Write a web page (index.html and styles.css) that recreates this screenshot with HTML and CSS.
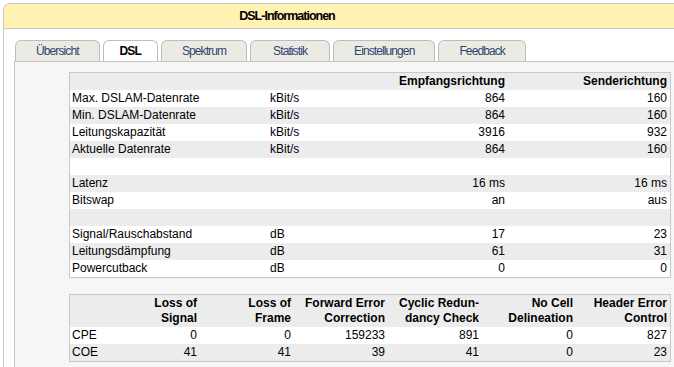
FILE: index.html
```html
<!DOCTYPE html>
<html lang="de">
<head>
    <meta charset="UTF-8">
    <title>DSL-Informationen</title>
    <link rel="stylesheet" href="styles.css">
</head>
<body>

<div class="box">
    <div class="box-head">DSL-Informationen</div>
    <div class="box-body">
        <ul class="tabs">
            <li class="tab">Übersicht</li>
            <li class="tab active">DSL</li>
            <li class="tab">Spektrum</li>
            <li class="tab">Statistik</li>
            <li class="tab">Einstellungen</li>
            <li class="tab">Feedback</li>
        </ul>
        <div class="panel">
            <table class="grid info">
                <colgroup>
                    <col class="c-label">
                    <col class="c-unit">
                    <col class="c-down">
                    <col class="c-up">
                </colgroup>
                <thead>
                    <tr>
                        <th></th>
                        <th></th>
                        <th class="num">Empfangsrichtung</th>
                        <th class="num">Senderichtung</th>
                    </tr>
                </thead>
                <tbody>
                    <tr><td>Max. DSLAM-Datenrate</td><td>kBit/s</td><td class="num">864</td><td class="num">160</td></tr>
                    <tr><td>Min. DSLAM-Datenrate</td><td>kBit/s</td><td class="num">864</td><td class="num">160</td></tr>
                    <tr><td>Leitungskapazität</td><td>kBit/s</td><td class="num">3916</td><td class="num">932</td></tr>
                    <tr><td>Aktuelle Datenrate</td><td>kBit/s</td><td class="num">864</td><td class="num">160</td></tr>
                    <tr><td>&nbsp;</td><td></td><td></td><td></td></tr>
                    <tr><td>Latenz</td><td></td><td class="num">16 ms</td><td class="num">16 ms</td></tr>
                    <tr><td>Bitswap</td><td></td><td class="num">an</td><td class="num">aus</td></tr>
                    <tr><td>&nbsp;</td><td></td><td></td><td></td></tr>
                    <tr><td>Signal/Rauschabstand</td><td>dB</td><td class="num">17</td><td class="num">23</td></tr>
                    <tr><td>Leitungsdämpfung</td><td>dB</td><td class="num">61</td><td class="num">31</td></tr>
                    <tr><td>Powercutback</td><td>dB</td><td class="num">0</td><td class="num">0</td></tr>
                </tbody>
            </table>

            <table class="grid errors">
                <colgroup>
                    <col class="c-side">
                    <col><col><col><col><col><col>
                </colgroup>
                <thead>
                    <tr>
                        <th></th>
                        <th class="num">Loss of<br>Signal</th>
                        <th class="num">Loss of<br>Frame</th>
                        <th class="num">Forward Error<br>Correction</th>
                        <th class="num">Cyclic Redun-<br>dancy Check</th>
                        <th class="num">No Cell<br>Delineation</th>
                        <th class="num">Header Error<br>Control</th>
                    </tr>
                </thead>
                <tbody>
                    <tr><td>CPE</td><td class="num">0</td><td class="num">0</td><td class="num">159233</td><td class="num">891</td><td class="num">0</td><td class="num">827</td></tr>
                    <tr><td>COE</td><td class="num">41</td><td class="num">41</td><td class="num">39</td><td class="num">41</td><td class="num">0</td><td class="num">23</td></tr>
                </tbody>
            </table>
        </div>
    </div>
</div>

</body>
</html>
```

FILE: styles.css
```css
html, body {
    margin: 0;
    height: 100%;
    overflow: hidden;
    background: #fff;
    font-family: "Liberation Sans", Arial, sans-serif;
    font-size: 12px;
    color: #000;
}
/* the box runs on past the right and bottom edge of the window */
.box {
    box-sizing: border-box;
    margin: 3px 0 0 3px;
    height: calc(100% - 3px);
    border-top: 1px solid #c8c8c8;
    border-left: 1px solid #c8c8c8;
    border-top-left-radius: 7px;
    display: flex;
    flex-direction: column;
    overflow: hidden;
}
.box-head {
    height: 24px;
    line-height: 25px;
    background: #fff2b3;
    border-bottom: 1px solid #c8c8c8;
    border-top-left-radius: 6px;
    text-align: center;
    font-weight: bold;
    font-size: 12.5px;
    letter-spacing: -1px;
    padding-right: 104px;
}
.box-body {
    flex: 1;
    display: flex;
    flex-direction: column;
    padding: 11px 0 0 10px;
}
.tabs {
    display: flex;
    gap: 3px;
    list-style: none;
    margin: 0;
    padding: 0 0 0 1px;
}
.tab {
    box-sizing: border-box;
    min-width: 80px;
    height: 21px;
    line-height: 21px;
    padding: 0 20px;
    text-align: center;
    border: 1px solid #bdbdbd;
    border-bottom: none;
    border-radius: 6px 6px 0 0;
    background: #ebebe4;
    color: #2e4470;
    letter-spacing: -0.9px;
}
.tab.active {
    min-width: 0;
    padding: 0 16px;
    background: #fff;
    color: #000;
    font-weight: bold;
}
.panel {
    flex: 1;
    border-top: 1px solid #c8c8c8;
    border-left: 1px solid #c8c8c8;
    background: #f6f6f6;
    padding: 10px 0 0 54px;
}
.grid {
    width: 602px;
    table-layout: fixed;
    border-collapse: separate;
    border-spacing: 0;
    border: 1px solid #c8c8c8;
    background: #fff;
}
.grid th,
.grid td {
    padding: 1px 3px 1px 2px;
    line-height: 15px;
    white-space: nowrap;
    text-align: left;
}
.grid th {
    font-weight: bold;
}
.grid thead tr,
.grid tbody tr:nth-child(even) {
    background: #ececec;
}
.grid .num {
    text-align: right;
}
.c-label { width: 198px; }
.c-unit { width: 110px; }
.c-down { width: 130px; }
.c-up { width: 162px; }
.errors {
    margin-top: 16px;
}
.c-side { width: 36px; }
```
